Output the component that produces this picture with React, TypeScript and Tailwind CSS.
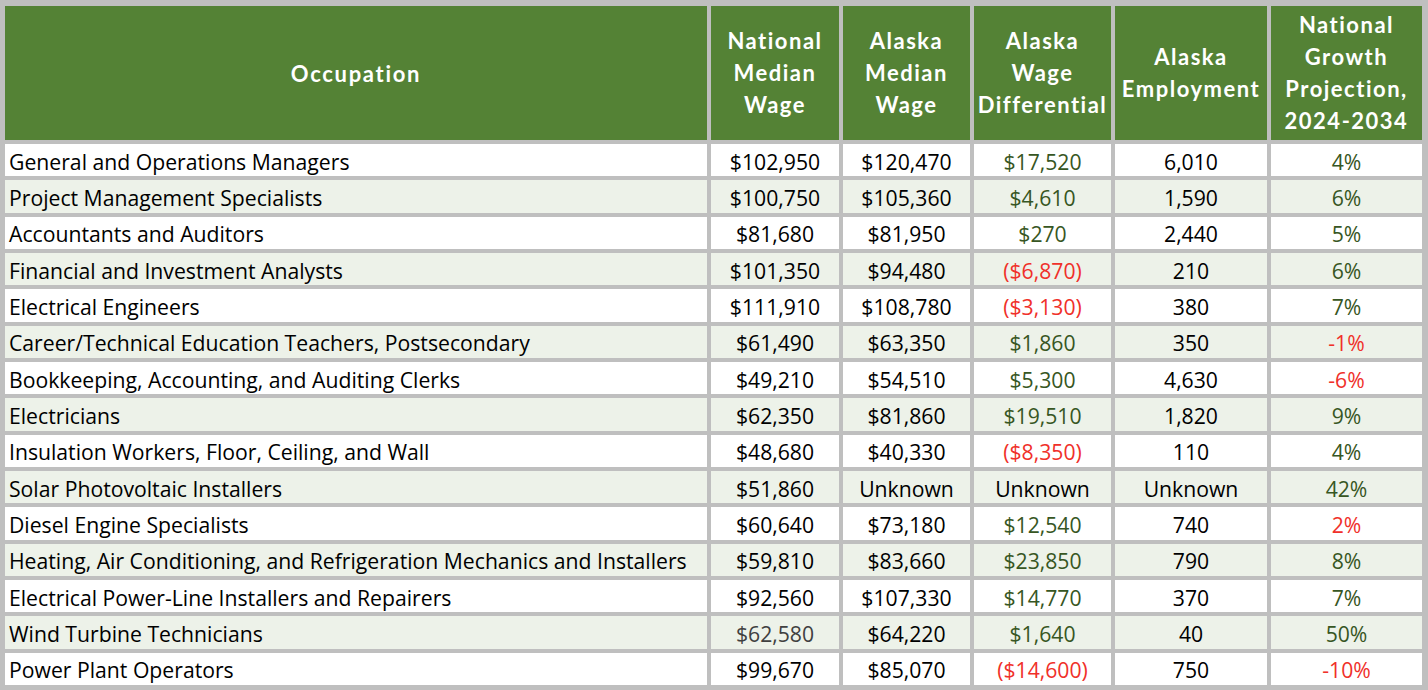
type Tone = "k" | "g" | "r" | "d";

interface Row {
  name: string;
  national: string;
  nationalTone?: Tone;
  alaska: string;
  diff: string;
  diffTone: Tone;
  employment: string;
  growth: string;
  growthTone: Tone;
}

const rows: Row[] = [
  { name: "General and Operations Managers", national: "$102,950", alaska: "$120,470", diff: "$17,520", diffTone: "g", employment: "6,010", growth: "4%", growthTone: "g" },
  { name: "Project Management Specialists", national: "$100,750", alaska: "$105,360", diff: "$4,610", diffTone: "g", employment: "1,590", growth: "6%", growthTone: "g" },
  { name: "Accountants and Auditors", national: "$81,680", alaska: "$81,950", diff: "$270", diffTone: "g", employment: "2,440", growth: "5%", growthTone: "g" },
  { name: "Financial and Investment Analysts", national: "$101,350", alaska: "$94,480", diff: "($6,870)", diffTone: "r", employment: "210", growth: "6%", growthTone: "g" },
  { name: "Electrical Engineers", national: "$111,910", alaska: "$108,780", diff: "($3,130)", diffTone: "r", employment: "380", growth: "7%", growthTone: "g" },
  { name: "Career/Technical Education Teachers, Postsecondary", national: "$61,490", alaska: "$63,350", diff: "$1,860", diffTone: "g", employment: "350", growth: "-1%", growthTone: "r" },
  { name: "Bookkeeping, Accounting, and Auditing Clerks", national: "$49,210", alaska: "$54,510", diff: "$5,300", diffTone: "g", employment: "4,630", growth: "-6%", growthTone: "r" },
  { name: "Electricians", national: "$62,350", alaska: "$81,860", diff: "$19,510", diffTone: "g", employment: "1,820", growth: "9%", growthTone: "g" },
  { name: "Insulation Workers, Floor, Ceiling, and Wall", national: "$48,680", alaska: "$40,330", diff: "($8,350)", diffTone: "r", employment: "110", growth: "4%", growthTone: "g" },
  { name: "Solar Photovoltaic Installers", national: "$51,860", alaska: "Unknown", diff: "Unknown", diffTone: "k", employment: "Unknown", growth: "42%", growthTone: "g" },
  { name: "Diesel Engine Specialists", national: "$60,640", alaska: "$73,180", diff: "$12,540", diffTone: "g", employment: "740", growth: "2%", growthTone: "r" },
  { name: "Heating, Air Conditioning, and Refrigeration Mechanics and Installers", national: "$59,810", alaska: "$83,660", diff: "$23,850", diffTone: "g", employment: "790", growth: "8%", growthTone: "g" },
  { name: "Electrical Power-Line Installers and Repairers", national: "$92,560", alaska: "$107,330", diff: "$14,770", diffTone: "g", employment: "370", growth: "7%", growthTone: "g" },
  { name: "Wind Turbine Technicians", national: "$62,580", nationalTone: "d", alaska: "$64,220", diff: "$1,640", diffTone: "g", employment: "40", growth: "50%", growthTone: "g" },
  { name: "Power Plant Operators", national: "$99,670", alaska: "$85,070", diff: "($14,600)", diffTone: "r", employment: "750", growth: "-10%", growthTone: "r" },
];

const toneClass: Record<Tone, string> = {
  k: "text-black",
  g: "text-[#375623]",
  r: "text-[#f0302a]",
  d: "text-[#404040]",
};

const headers = [
  ["National", "Median", "Wage"],
  ["Alaska", "Median", "Wage"],
  ["Alaska", "Wage", "Differential"],
  ["Alaska", "Employment"],
  ["National", "Growth", "Projection,", "2024-2034"],
];

const headFont = { fontFamily: "Lato, 'Liberation Sans', sans-serif" };

function HeadCell({ lines }: { lines: string[] }) {
  return (
    <div
      className="flex flex-col items-center justify-center bg-[#548235] text-center text-[22px] font-bold leading-[32px] tracking-[1.5px] text-white"
      style={headFont}
    >
      {lines.map((l) => (
        <span key={l} className="whitespace-nowrap">
          {l}
        </span>
      ))}
    </div>
  );
}

export default function App() {
  return (
    <div className="h-[690px] w-[1428px] overflow-hidden bg-[#bfbfbf] pb-[5px] pl-[5px] pr-[6px] pt-[6px]">
      <div
        className="grid h-full grid-cols-[702px_128px_127px_137px_152px_151px] grid-rows-[134px_repeat(15,minmax(0,1fr))] gap-[4px]"
        style={{ fontFamily: "'Open Sans', 'Noto Sans', sans-serif" }}
      >
        {/* Header */}
        <div
          className="flex items-center justify-center bg-[#548235] text-[22px] font-bold tracking-[1.7px] text-white"
          style={headFont}
        >
          Occupation
        </div>
        {headers.map((h, i) => (
          <HeadCell key={i} lines={h} />
        ))}

        {/* Body */}
        {rows.map((r, i) => {
          const bg = i % 2 === 0 ? "bg-white" : "bg-[#edf2e9]";
          const cell = `flex items-center justify-center pt-[3px] text-[21.2px] leading-[26px] ${bg}`;
          return (
            <div key={r.name} className="contents">
              <div className={`flex items-center whitespace-nowrap pl-[4px] pt-[3px] text-[21.2px] leading-[26px] text-black ${bg}`}>
                {r.name}
              </div>
              <div className={`${cell} ${toneClass[r.nationalTone ?? "k"]}`}>{r.national}</div>
              <div className={`${cell} text-black`}>{r.alaska}</div>
              <div className={`${cell} ${toneClass[r.diffTone]}`}>{r.diff}</div>
              <div className={`${cell} text-black`}>{r.employment}</div>
              <div className={`${cell} ${toneClass[r.growthTone]}`}>{r.growth}</div>
            </div>
          );
        })}
      </div>
    </div>
  );
}
